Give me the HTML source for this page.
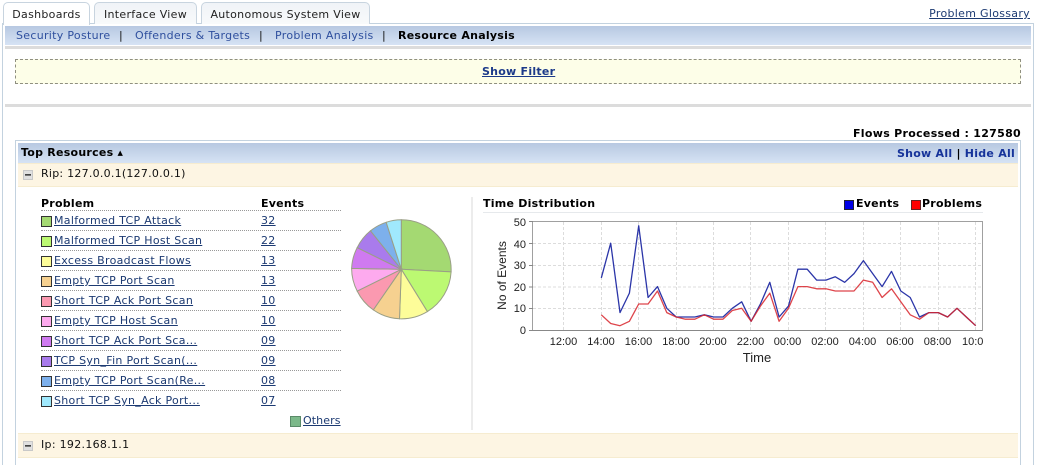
<!DOCTYPE html>
<html><head><meta charset="utf-8"><style>
html,body{margin:0;padding:0;background:#fff;width:1044px;height:465px;overflow:hidden}
body{position:relative;font-family:"DejaVu Sans","Liberation Sans",sans-serif;font-size:11px;color:#111;letter-spacing:.3px}
.t,.b{position:absolute;white-space:nowrap;line-height:14px}
.b{display:block}
a{color:#1c3a72;text-decoration:underline}
.n{color:#2e4f9e}
.h{font-weight:700;color:#000;letter-spacing:.25px}
.tab{position:absolute;top:2px;height:22px;box-sizing:border-box;border:1px solid #c8d4df;border-bottom:0;border-radius:5px 5px 0 0;background:linear-gradient(#f0f3f7,#f8fafb);line-height:23px;text-align:center;color:#222;white-space:nowrap;z-index:2}
.sw{position:absolute;width:9px;height:9px;border:1px solid #333}
.dot{position:absolute;left:41px;width:300px;border-top:1px dotted #999}
.row{position:absolute;background:#fdf5e3;left:18px;width:1000px;border-top:1px solid #f6ecd0;border-bottom:1px solid #f6ecd0;box-sizing:border-box}
.mn{position:absolute;left:23px;width:8px;height:8px;border:1px solid #c8c8c8;background:#e0e0e0}
.mn:after{content:"";position:absolute;left:1px;top:3px;width:6px;height:1px;background:#444;border-bottom:1px solid #777}
</style></head><body>
<div class="b" style="left:2px;top:23px;width:1032px;height:442px;box-sizing:border-box;border:1px solid #c3d2df;border-bottom:0"></div>
<div class="tab" style="left:3px;width:87px;background:#fff;height:23px">Dashboards</div>
<div class="tab" style="left:94px;width:103px">Interface View</div>
<div class="tab" style="left:201px;width:169px">Autonomous System View</div>
<a class="t" style="right:14px;top:7px">Problem Glossary</a>
<div class="b" style="left:5px;top:26px;width:1026px;height:19px;background:linear-gradient(#b7c8e1,#d6e3f4)"></div>
<div class="b" style="left:5px;top:46px;width:1026px;height:3px;background:#dcdcdc"></div>
<span class="t n" style="left:16px;top:29px">Security Posture</span><span class="t" style="left:119px;top:29px">|</span>
<span class="t n" style="left:135px;top:29px">Offenders &amp; Targets</span><span class="t" style="left:259px;top:29px">|</span>
<span class="t n" style="left:275px;top:29px">Problem Analysis</span><span class="t" style="left:382px;top:29px">|</span>
<span class="t h" style="left:398px;top:29px">Resource Analysis</span>
<div class="b" style="left:15px;top:59px;width:1006px;height:25px;box-sizing:border-box;border:1px dashed #8f8f80;background:#fdfee8"></div>
<a class="t" style="left:482px;top:65px;font-weight:700;color:#1c3a8a;letter-spacing:.25px">Show Filter</a>
<div class="b" style="left:5px;top:104px;width:1026px;height:3px;background:#dcdcdc"></div>
<span class="t h" style="right:23px;top:127px;letter-spacing:.3px">Flows Processed : 127580</span>
<div class="b" style="left:15px;top:140px;width:1006px;height:325px;box-sizing:border-box;border:1px solid #c3d2df;border-bottom:0"></div>
<div class="b" style="left:18px;top:143px;width:1000px;height:20px;background:linear-gradient(#b7c8e1,#d6e3f4)"></div>
<span class="t h" style="left:21px;top:146px">Top Resources <span style="font-size:7px;vertical-align:1px">▲</span></span>
<span class="t" style="right:29px;top:147px;font-weight:700;color:#16339a;letter-spacing:.25px">Show All <span style="color:#000">|</span> Hide All</span>
<div class="row" style="top:163px;height:24px"></div>
<div class="mn" style="top:170px"></div>
<span class="t" style="left:41px;top:167px;letter-spacing:.25px">Rip: 127.0.0.1(127.0.0.1)</span>

<span class="t h" style="left:41px;top:197px">Problem</span><span class="t h" style="left:261px;top:197px">Events</span>
<div class="dot" style="top:210px"></div><div class="dot" style="top:230px"></div><div class="dot" style="top:250px"></div><div class="dot" style="top:270px"></div><div class="dot" style="top:290px"></div><div class="dot" style="top:310px"></div><div class="dot" style="top:330px"></div><div class="dot" style="top:350px"></div><div class="dot" style="top:370px"></div><div class="dot" style="top:390px"></div>

<div class="sw" style="left:41px;top:216px;background:#a4d972"></div><a class="t" style="left:54px;top:214px">Malformed TCP Attack</a><a class="t" style="left:261px;top:214px">32</a>
<div class="sw" style="left:41px;top:236px;background:#bcf972"></div><a class="t" style="left:54px;top:234px">Malformed TCP Host Scan</a><a class="t" style="left:261px;top:234px">22</a>
<div class="sw" style="left:41px;top:256px;background:#fdfd99"></div><a class="t" style="left:54px;top:254px">Excess Broadcast Flows</a><a class="t" style="left:261px;top:254px">13</a>
<div class="sw" style="left:41px;top:276px;background:#f6d190"></div><a class="t" style="left:54px;top:274px">Empty TCP Port Scan</a><a class="t" style="left:261px;top:274px">13</a>
<div class="sw" style="left:41px;top:296px;background:#fb99b0"></div><a class="t" style="left:54px;top:294px">Short TCP Ack Port Scan</a><a class="t" style="left:261px;top:294px">10</a>
<div class="sw" style="left:41px;top:316px;background:#fdaaee"></div><a class="t" style="left:54px;top:314px">Empty TCP Host Scan</a><a class="t" style="left:261px;top:314px">10</a>
<div class="sw" style="left:41px;top:336px;background:#cf7af0"></div><a class="t" style="left:54px;top:334px">Short TCP Ack Port Sca...</a><a class="t" style="left:261px;top:334px">09</a>
<div class="sw" style="left:41px;top:356px;background:#a97bec"></div><a class="t" style="left:54px;top:354px">TCP Syn_Fin Port Scan(...</a><a class="t" style="left:261px;top:354px">09</a>
<div class="sw" style="left:41px;top:376px;background:#7db0ec"></div><a class="t" style="left:54px;top:374px">Empty TCP Port Scan(Re...</a><a class="t" style="left:261px;top:374px">08</a>
<div class="sw" style="left:41px;top:396px;background:#a0e9fd"></div><a class="t" style="left:54px;top:394px">Short TCP Syn_Ack Port...</a><a class="t" style="left:261px;top:394px">07</a>
<div class="sw" style="left:290px;top:416px;background:#7cb98a;border-color:#5a8a68"></div><a class="t" style="left:303px;top:414px;letter-spacing:.1px">Others</a>

<div class="b" style="left:471px;top:197px;width:2px;height:233px;background:#ececec"></div>
<span class="t h" style="left:483px;top:197px">Time Distribution</span>
<div class="b" style="left:483px;top:212px;width:500px;height:1px;background:#e6e9ec"></div>
<div class="b" style="left:844px;top:200px;width:8px;height:8px;background:#0000e6;border:1px solid #223"></div><span class="t h" style="left:856px;top:197px">Events</span>
<div class="b" style="left:911px;top:200px;width:8px;height:8px;background:#f00;border:1px solid #622"></div><span class="t h" style="left:922px;top:197px">Problems</span>

<svg style="position:absolute;left:0;top:0;letter-spacing:0" width="1044" height="465" viewBox="0 0 1044 465">
<g stroke="#9a9f86" stroke-width="1">
<path fill="#a4d972" d="M401.3 269.3L401.3 219.8A49.8 49.8 0 0 1 451.1 271.9Z"/>
<path fill="#bcf972" d="M401.3 269.3L451.1 271.9A49.8 49.8 0 0 1 427.4 311.6Z"/>
<path fill="#fdfd99" d="M401.3 269.3L427.4 311.6A49.8 49.8 0 0 1 399.5 318.8Z"/>
<path fill="#f6d190" d="M401.3 269.3L399.5 318.8A49.8 49.8 0 0 1 373.3 309.9Z"/>
<path fill="#fb99b0" d="M401.3 269.3L373.3 309.9A49.8 49.8 0 0 1 357.2 291.1Z"/>
<path fill="#fdaaee" d="M401.3 269.3L357.2 291.1A49.8 49.8 0 0 1 351.6 268.4Z"/>
<path fill="#cf7af0" d="M401.3 269.3L351.6 268.4A49.8 49.8 0 0 1 357.2 247.6Z"/>
<path fill="#a97bec" d="M401.3 269.3L357.2 247.6A49.8 49.8 0 0 1 370.5 230.8Z"/>
<path fill="#7db0ec" d="M401.3 269.3L370.5 230.8A49.8 49.8 0 0 1 386.2 222.3Z"/>
<path fill="#a0e9fd" d="M401.3 269.3L386.2 222.3A49.8 49.8 0 0 1 401.3 219.8Z"/>
</g>
<g stroke="#dcdcdc" stroke-dasharray="3 2" fill="none">
<path d="M533 243.5H982M533 265.5H982M533 287H982M533 308.5H982"/>
<path d="M563.5 222V330M601.5 222V330M638.5 222V330M676.5 222V330M713.5 222V330M750.5 222V330M788.5 222V330M825.5 222V330M863.5 222V330M900.5 222V330M938.5 222V330M975.5 222V330"/>
</g>
<path fill="none" stroke="#a0a0a0" d="M532.5 221.5H982.5V330.5H532.5Z"/>
<path fill="none" stroke="#888" d="M529 221.5H533M529 243.5H533M529 265.5H533M529 287H533M529 308.5H533M529 330.5H982"/>
<g fill="none" stroke-width="1.3" stroke-linejoin="round">
<polyline stroke="#2b35a8" points="601.3,277.9 610.7,243.2 620,312.6 629.4,293.1 638.7,225.8 648.1,297.5 657.5,286.6 666.8,308.3 676.2,317 685.5,317 694.9,317 704.3,314.8 713.6,317 723,317 732.3,308.3 741.7,301.8 751.1,321.3 760.4,304 769.8,282.3 779.1,317 788.5,306.1 797.9,269.2 807.2,269.2 816.6,280.1 825.9,280.1 835.3,276.8 844.7,282.3 854,273.6 863.4,260.6 872.7,273.6 882.1,286.6 891.5,271.4 900.8,291 910.2,297.5 919.5,317 928.9,312.6 938.3,312.6 947.6,317 957,308.3 966.3,317 975.7,325.7"/>
<polyline stroke="#d8242c" stroke-opacity=".85" points="601.3,314.8 610.7,323.5 620,325.7 629.4,321.3 638.7,304 648.1,304 657.5,291 666.8,312.6 676.2,317 685.5,319.2 694.9,319.2 704.3,314.8 713.6,319.2 723,319.2 732.3,310.5 741.7,308.3 751.1,321.3 760.4,306.1 769.8,293.1 779.1,321.3 788.5,308.3 797.9,286.6 807.2,286.6 816.6,288.8 825.9,288.8 835.3,291 844.7,291 854,291 863.4,280.1 872.7,282.3 882.1,297.5 891.5,288.8 900.8,301.8 910.2,314.8 919.5,319.2 928.9,312.6 938.3,312.6 947.6,317 957,308.3 966.3,317 975.7,325.7"/>
</g>
<g font-family="Liberation Sans,sans-serif" font-size="11" fill="#222">
<g text-anchor="end">
<text x="526" y="226">50</text><text x="526" y="248">40</text><text x="526" y="269">30</text><text x="526" y="291">20</text><text x="526" y="312">10</text><text x="526" y="334">0</text>
</g>
<g text-anchor="middle">
<text x="563.5" y="345">12:00</text><text x="601" y="345">14:00</text><text x="638.5" y="345">16:00</text><text x="676" y="345">18:00</text><text x="713" y="345">20:00</text><text x="750.5" y="345">22:00</text><text x="787.5" y="345">00:00</text><text x="825" y="345">02:00</text><text x="862.5" y="345">04:00</text><text x="900" y="345">06:00</text><text x="937.5" y="345">08:00</text>
<text x="757" y="362" font-size="13">Time</text>
<text transform="translate(506 275.5) rotate(-90)" font-size="12">No of Events</text>
</g>
<svg x="960" y="330" width="23" height="20" viewBox="960 330 23 20" overflow="hidden"><text x="962" y="345">10:00</text></svg>
</g>
</svg>

<div class="row" style="top:433px;height:25px"></div>
<div class="mn" style="top:441px"></div>
<span class="t" style="left:41px;top:438px">Ip: 192.168.1.1</span>
</body></html>
